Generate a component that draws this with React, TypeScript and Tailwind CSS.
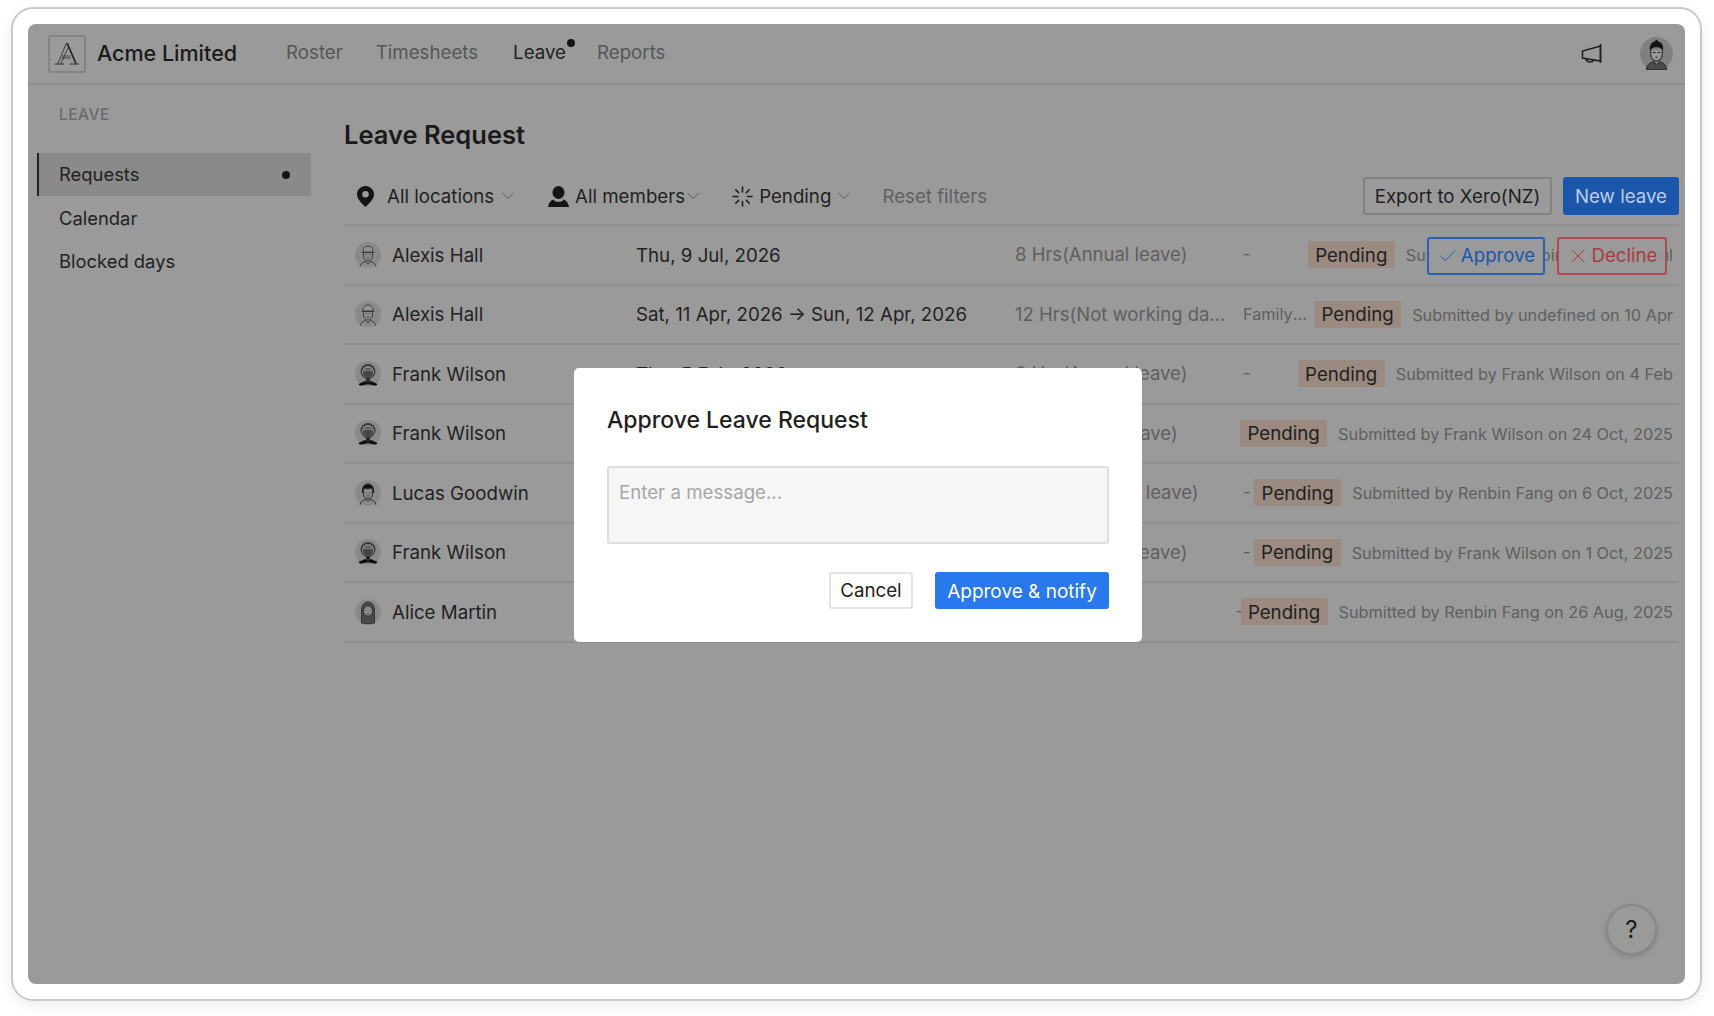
import { Check, ChevronDown, X } from "lucide-react";

type Person = "alexis" | "frank" | "lucas" | "alice";

type Row = {
  person: Person;
  name: string;
  date: string;
  hours: string;
  note: string;
  submitted: string;
};

const rows: Row[] = [
  { person: "alexis", name: "Alexis Hall", date: "Thu, 9 Jul, 2026", hours: "8 Hrs(Annual leave)", note: "-", submitted: "Submitted by Renbin Fang on 8 Jul" },
  { person: "alexis", name: "Alexis Hall", date: "Sat, 11 Apr, 2026 → Sun, 12 Apr, 2026", hours: "12 Hrs(Not working days off)", note: "Family wedding", submitted: "Submitted by undefined on 10 Apr" },
  { person: "frank", name: "Frank Wilson", date: "Thu, 5 Feb, 2026", hours: "8 Hrs(Annual leave)", note: "-", submitted: "Submitted by Frank Wilson on 4 Feb" },
  { person: "frank", name: "Frank Wilson", date: "Mon, 27 Oct, 2025", hours: "8 Hrs(Study leave)", note: "", submitted: "Submitted by Frank Wilson on 24 Oct, 2025" },
  { person: "lucas", name: "Lucas Goodwin", date: "Wed, 8 Oct, 2025", hours: "8 Hrs(Parental leave)", note: "-", submitted: "Submitted by Renbin Fang on 6 Oct, 2025" },
  { person: "frank", name: "Frank Wilson", date: "Fri, 3 Oct, 2025", hours: "8 Hrs(Annual leave)", note: "-", submitted: "Submitted by Frank Wilson on 1 Oct, 2025" },
  { person: "alice", name: "Alice Martin", date: "Thu, 28 Aug, 2025", hours: "8 Hrs(Sick)", note: "-", submitted: "Submitted by Renbin Fang on 26 Aug, 2025" },
];

function Avatar({ person, size = 26 }: { person: Person; size?: number }) {
  return (
    <svg width={size} height={size} viewBox="0 0 26 26" className="shrink-0">
      <circle cx="13" cy="13" r="13" fill="#8a8a8a" />
      {person === "alexis" && (
        <g fill="none" stroke="#2e2e2e" strokeWidth="0.8">
          <path d="M8 10c0-4 2-6 5-6s5 2 5 6z" fill="#949494" />
          <path d="M6.500 10.500h13" />
          <path d="M8.500 11v3c0 3 2 5 4.500 5s4.500-2 4.500-5v-3" />
          <path d="M11 12.500h.8M14.300 12.500h.8M12 16h2" />
          <path d="M5 25c.5-3.500 3-5 6-5.500l2 2.500 2-2.500c3 .5 5.500 2 6 5.500" />
        </g>
      )}
      {person === "frank" && (
        <g>
          <circle cx="13" cy="10.500" r="7.500" fill="#3a3a3a" />
          <circle cx="13" cy="11" r="6" fill="#8a8a8a" />
          <circle cx="13" cy="12" r="5" fill="#454545" />
          <path d="M9 10c2-1.500 6-1.500 8 0" stroke="#a0a0a0" strokeWidth="1" fill="none" />
          <path d="M3.500 23l6.500-3 3 1.500 3-1.500 6.500 3-1.500 1.800-8-1.500-8 1.500z" fill="#0d0d0d" />
          <rect x="11" y="17" width="4" height="4" fill="#2a2a2a" />
        </g>
      )}
      {person === "lucas" && (
        <g fill="none" stroke="#1f1f1f" strokeWidth="0.9">
          <path d="M7.500 13c-1-6 2-9 5.500-9s6.500 3 5.500 9c-.5-3-1.500-4.500-2.500-5-2 1-5 1-6 0-1 .5-2 2-2.500 5z" fill="#111" />
          <path d="M8.500 11v3c0 3 2 5 4.500 5s4.500-2 4.500-5v-3" />
          <path d="M11 13h.8M14.300 13h.8M12 16h2" />
          <path d="M5 25c.5-3.500 3-5 6-5.500l2 2 2-2c3 .5 5.500 2 6 5.500" />
        </g>
      )}
      {person === "alice" && (
        <g>
          <path d="M6.500 24v-13c0-5 3-8 6.500-8s6.500 3 6.500 8v13c-4 1-9 1-13 0z" fill="#4a4a4a" stroke="#1f1f1f" strokeWidth="0.7" />
          <ellipse cx="13" cy="12" rx="4.500" ry="5" fill="#8f8f8f" stroke="#1f1f1f" strokeWidth="0.7" />
          <path d="M11 11.500h.8M14.200 11.500h.8M12 14.500h2" stroke="#1f1f1f" strokeWidth="0.8" />
        </g>
      )}
    </svg>
  );
}

function TopAvatar() {
  return (
    <svg width="33" height="33" viewBox="0 0 26 26">
      <circle cx="13" cy="13" r="13" fill="#808080" />
      <path d="M8 11c-1-5 2-7.500 3-7l2-2 2 2c1-.5 4 2 3 7-1-2-2-3-5-3s-4 1-5 3z" fill="#141414" />
      <path d="M8.500 10.500v3c0 3 2 5.500 4.500 5.500s4.500-2.500 4.500-5.500v-3" fill="#9a9a9a" stroke="#1f1f1f" strokeWidth="0.8" />
      <path d="M10 12.300h2.200M13.800 12.300h2.200M12.200 16h1.600" stroke="#1f1f1f" strokeWidth="0.8" fill="none" />
      <path d="M5 26c0-4 3-6 6-6.500l2 2.500 2-2.500c3 .5 6 2.500 6 6.500z" fill="#4a4a4a" stroke="#1f1f1f" strokeWidth="0.7" />
    </svg>
  );
}

function Logo() {
  return (
    <div className="flex h-[38px] w-[38px] shrink-0 items-center justify-center rounded-[3px] border-2 border-[#848484]">
      <svg width="26" height="24" viewBox="0 0 26 24" fill="none" stroke="#262626">
        <path d="M12.500 1 4 21.500M14.500 5 7 21.500" strokeWidth="0.8" />
        <path d="M13 1l9 20.500" strokeWidth="1.800" />
        <path d="M8 14h8.500M7.500 16h9.500" strokeWidth="0.7" />
        <path d="M1 22h9M16 22h9" strokeWidth="1" />
      </svg>
    </div>
  );
}

function Megaphone() {
  return (
    <svg width="21" height="21" viewBox="0 0 21 21" fill="none" stroke="#1f1f1f" strokeWidth="1.500">
      <path d="M19.500 1v19" />
      <path d="M19.500 3 1.500 8v7l18 3z" />
      <path d="M5 15.500c0 4 6 4.500 8 1.500" />
    </svg>
  );
}

function Pin() {
  return (
    <svg width="17" height="21" viewBox="0 0 17 21">
      <path fillRule="evenodd" d="M8.500 0C3.800 0 0 3.700 0 8.300 0 13.500 5.500 18 8.500 21c3-3 8.500-7.500 8.500-12.700C17 3.700 13.200 0 8.500 0zm0 5a3.300 3.300 0 1 1 0 6.600 3.300 3.300 0 0 1 0-6.600z" fill="#141414" />
    </svg>
  );
}

function UserFill() {
  return (
    <svg width="21" height="21" viewBox="0 0 21 21" fill="#141414">
      <ellipse cx="10.500" cy="6.500" rx="6" ry="6.500" />
      <path d="M0 21c.5-4 2.500-6.500 5.500-7.500 1 1.800 3 2.500 5 2.500s4-.7 5-2.500c3 1 5 3.500 5.500 7.500z" />
    </svg>
  );
}

function Spinner() {
  return (
    <svg width="21" height="21" viewBox="0 0 21 21" fill="none" stroke="#1f1f1f" strokeWidth="1.600" strokeLinecap="round">
      <path d="M10.500 1v5M10.500 15.500V20M1 10.500h5M15.500 10.500H20M3.800 3.800l2.800 2.800M14.400 14.400l2.800 2.800M17.200 3.800l-2.800 2.800M6.600 14.400l-2.800 2.800" />
    </svg>
  );
}

function Filter({ icon, label, gap, chevronGap }: { icon: React.ReactNode; label: string; gap: string; chevronGap: string }) {
  return (
    <div className={`flex items-center ${gap}`}>
      {icon}
      <div className={`flex items-center ${chevronGap}`}>
        <span className="pt-[2px] text-[#1f1f1f]">{label}</span>
        <ChevronDown size={20} strokeWidth={0.9} className="text-[#3a3a3a]" />
      </div>
    </div>
  );
}

function RequestRow({ row, first }: { row: Row; first: boolean }) {
  return (
    <div className="relative flex h-[59.500px] items-center border-b-2 border-[#8f8f8f] pl-[11px] pr-[6px]">
      <div className="flex w-[281px] shrink-0 items-center gap-[11px]">
        <Avatar person={row.person} />
        <span className="pt-[3px] text-[#222222]">{row.name}</span>
      </div>
      <div className="w-[379px] shrink-0 whitespace-nowrap pt-[3px] text-[#222222]">{row.date}</div>
      <div className="w-[228px] min-w-0 truncate pr-[10px] text-[18.500px] leading-[25px] text-[#5f5f5f]">{row.hours}</div>
      <div className="min-w-[5px] flex-1 truncate text-[16.300px] leading-[23px] text-[#5f5f5f]">{row.note}</div>
      <div className={row.note === "-" ? "flex shrink-0 items-center gap-[11px]" : "ml-[5px] flex shrink-0 items-center gap-[11px]"}>
        <span className="flex h-[27px] w-[87px] items-center justify-center rounded-[2px] bg-[#9a8a80] pt-[3px] text-[#1f1f1f]">Pending</span>
        <span className="whitespace-nowrap pt-[1px] text-[16.300px] text-[#5f5f5f]">{row.submitted}</span>
      </div>
      {first && (
        <div className="absolute right-[12px] top-[11px] flex gap-3">
          <button className="flex h-[38px] w-[118px] items-center justify-center gap-[2px] rounded-[3px] border-2 border-[#2a62b0] bg-[#9a9a9a] text-[#1d57a8]">
            <Check size={22} strokeWidth={1} />
            Approve
          </button>
          <button className="flex h-[38px] w-[110px] items-center justify-center gap-[1px] rounded-[3px] border-2 border-[#b04a52] bg-[#9a9a9a] text-[#a83a42]">
            <X size={24} strokeWidth={1} />
            Decline
          </button>
        </div>
      )}
    </div>
  );
}

export default function App() {
  return (
    <div className="h-[1016px] w-[1714px] overflow-hidden bg-white pl-[11px] pt-[7px] font-['Inter',sans-serif] text-[18.700px] leading-none">
      <div className="h-[994px] w-[1691px] rounded-[22px] border-2 border-[#c9c9c9] p-[15px] shadow-[0_4px_14px_rgba(0,0,0,0.08)]">
        <div className="relative flex h-full flex-col overflow-hidden rounded-[8px] bg-[#9a9a9a]">
          <header className="flex h-[61px] shrink-0 items-center border-b-2 border-[#8f8f8f] pl-5 pr-3">
            <Logo />
            <span className="ml-[11px] text-[21.500px] font-medium text-[#1a1a1a]">Acme Limited</span>
            <nav className="ml-[49px] flex items-center gap-[33px] text-[#565656]">
              <span>Roster</span>
              <span>Timesheets</span>
              <span className="relative ml-[2px] text-[#1f1f1f]">
                Leave
                <span className="absolute -right-[9px] -top-[5px] h-2 w-2 rounded-full bg-[#141414]" />
              </span>
              <span className="-ml-[2px]">Reports</span>
            </nav>
            <div className="ml-auto flex items-center gap-[38px]">
              <Megaphone />
              <TopAvatar />
            </div>
          </header>

          <div className="flex min-h-0 flex-1">
            <aside className="w-[316px] shrink-0 pl-[9px] pr-[33px] pt-[22px]">
              <div className="pl-[22px] text-[15.500px] font-medium tracking-[0.5px] text-[#6a6a6a]">LEAVE</div>
              <div className="mt-[30px] flex flex-col text-[18.400px] text-[#222222]">
                <div className="flex h-[43px] items-center justify-between border-l-2 border-[#222222] bg-[#8a8a8a] pl-5 pr-[21px] pt-[1px]">
                  Requests
                  <span className="h-2 w-2 rounded-full bg-[#141414]" />
                </div>
                <div className="flex h-[43.500px] items-center pl-[22px] pt-[1px]">Calendar</div>
                <div className="flex h-[43.500px] items-center pl-[22px] pt-[1px]">Blocked days</div>
              </div>
            </aside>

            <main className="min-w-0 flex-1 pr-[6px]">
              <h1 className="mt-[35px] text-[25.500px] font-semibold leading-[30px] text-[#1a1a1a]">Leave Request</h1>
              <div className="mt-[27px] flex h-[49px] items-start border-b-2 border-[#8f8f8f] pl-[13px]">
                <div className="flex h-[38px] items-center">
                  <Filter icon={<Pin />} label="All locations" gap="gap-[13px]" chevronGap="gap-[4px]" />
                  <div className="ml-[30px]">
                    <Filter icon={<UserFill />} label="All members" gap="gap-[6px]" chevronGap="-space-x-[2px]" />
                  </div>
                  <div className="ml-[29px]">
                    <Filter icon={<Spinner />} label="Pending" gap="gap-[6px]" chevronGap="gap-[3px]" />
                  </div>
                  <span className="ml-[28px] pt-[2px] text-[#606060]">Reset filters</span>
                </div>
                <div className="ml-auto flex gap-[11px]">
                  <button className="h-[38px] w-[189px] rounded-[3px] border-2 border-[#828282] pt-[2px] text-[#1f1f1f]">Export to Xero(NZ)</button>
                  <button className="h-[38px] w-[116px] rounded-[3px] bg-[#1c56ab] pt-[2px] text-[#b9cdea]">New leave</button>
                </div>
              </div>
              {rows.map((row, i) => (
                <RequestRow key={i} row={row} first={i === 0} />
              ))}
            </main>
          </div>

          <button className="absolute bottom-[29px] right-[28px] flex h-[51px] w-[51px] items-center justify-center rounded-full border-2 border-[#888888] bg-[#9a9a9a] text-[24px] text-[#1a1a1a] shadow-[0_2px_5px_rgba(0,0,0,0.15)]">
            ?
          </button>

          <div className="absolute left-[546px] top-[344px] flex h-[274px] w-[568px] flex-col rounded-[5px] bg-white px-[33px]">
            <h2 className="mt-[38px] text-[23px] font-medium leading-[28px] text-[#1f1f1f]">Approve Leave Request</h2>
            <textarea
              placeholder="Enter a message..."
              readOnly
              className="mt-[32px] h-[78px] w-full resize-none rounded-[3px] border-2 border-[#dddddd] bg-[#f6f6f6] px-[10px] py-[14px] text-[18.700px] leading-[22px] outline-none placeholder:text-[#a6a6a6]"
            />
            <div className="mt-[28px] flex justify-end gap-[22px]">
              <button className="h-[37px] w-[84px] rounded-[3px] border-2 border-[#e3e3e3] pt-[2px] text-[#222222]">Cancel</button>
              <button className="h-[37px] w-[174px] rounded-[3px] bg-[#2878ee] pt-[1px] text-[19px] text-white">Approve &amp; notify</button>
            </div>
          </div>
        </div>
      </div>
    </div>
  );
}
